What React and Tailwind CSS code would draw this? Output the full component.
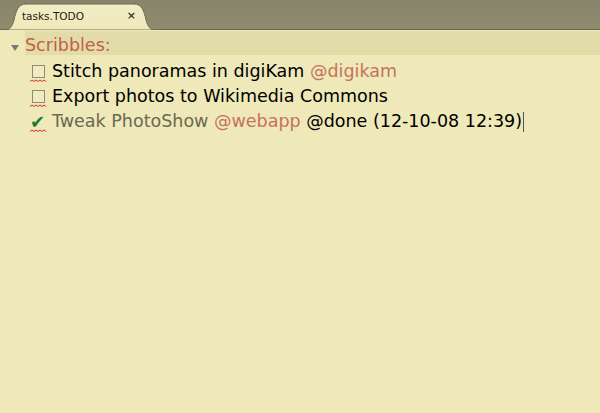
import React from 'react'

const font = { fontFamily: '"DejaVu Sans", "Noto Sans", sans-serif' }

function Tab() {
  return (
    <div className="relative w-[152px] h-[27px] mt-[3px] ml-[4px]">
      <svg className="absolute inset-0" width="152" height="27" viewBox="0 0 152 27">
        <defs>
          <linearGradient id="tabg" x1="0" y1="0" x2="0" y2="1">
            <stop offset="0" stopColor="#f3edc6" />
            <stop offset="1" stopColor="#efe8ba" />
          </linearGradient>
        </defs>
        <path d="M0 27 C6 27 8 24 10 17 C12 8 14 1 22 1 L130 1 C138 1 140 8 142 17 C144 24 146 27 152 27 Z" fill="url(#tabg)" stroke="#6f6b52" strokeWidth="1" />
      </svg>
      <div className="relative flex items-center h-full pl-[18px] pr-[20px] text-[10.5px] text-[#1c1c14]" style={font}>
        <span className="flex-1 pt-[1px]">tasks.TODO</span>
        <span className="text-[11px] font-bold text-[#3a3a30]">×</span>
      </div>
    </div>
  )
}

// red spell-check squiggle under the task marker
function Squiggle() {
  return (
    <svg className="absolute left-[-2px] top-[14px]" width="16" height="4" viewBox="0 0 16 4">
      <path d="M0 2.5 L2 1 L4 2.5 L6 1 L8 2.5 L10 1 L12 2.5 L14 1 L16 2.5" fill="none" stroke="#e02b2b" strokeWidth="1" />
    </svg>
  )
}

function Row({ mark, children }) {
  return (
    <div className="flex items-center h-[25px] pl-[32px]">
      <span className="relative w-[20px] h-[13px] shrink-0 flex items-center">
        {mark === 'done' ? (
          <span className="text-[#1e7a2c] text-[18px] leading-none ml-[-2px]">✔</span>
        ) : (
          <span className="block shrink-0 w-[13px] h-[13px] border border-[#8f8b77] bg-[#f1ebc0]" />
        )}
        <Squiggle />
      </span>
      <span className="whitespace-pre">{children}</span>
    </div>
  )
}

export default function App() {
  return (
    <div className="w-[600px] h-[413px] bg-[#efe8b9] overflow-hidden" style={font}>
      <div className="flex h-[30px] bg-gradient-to-b from-[#88846a] to-[#8f8b6e] border-b border-[#6c6850]">
        <Tab />
      </div>
      <div className="text-[17.5px] leading-[25px] pt-[1px]">
        <div className="flex h-[24px]">
          <span className="w-[25px] pl-[11px] pt-[14px]">
            <svg width="8" height="6" viewBox="0 0 8 6">
              <path d="M0 0 L8 0 L4 6 Z" fill="#7a7a7c" />
            </svg>
          </span>
          <div className="flex-1 bg-[#e2dca9] h-full text-[#c2604a] pt-[2px]">Scribbles:</div>
        </div>
        <div className="pt-[4px]">
          <Row>
            <span className="text-black">Stitch panoramas in digiKam </span>
            <span className="text-[#c5735b]">@digikam</span>
          </Row>
          <Row>
            <span className="text-black">Export photos to Wikimedia Commons</span>
          </Row>
          <Row mark="done">
            <span className="text-[#6a6954]">Tweak PhotoShow </span>
            <span className="text-[#c5735b]">@webapp </span>
            <span className="text-black">@done (12-10-08 12:39)</span>
            <span className="inline-block w-px h-[20px] bg-[#555] ml-[1px] align-middle" />
          </Row>
        </div>
      </div>
    </div>
  )
}
